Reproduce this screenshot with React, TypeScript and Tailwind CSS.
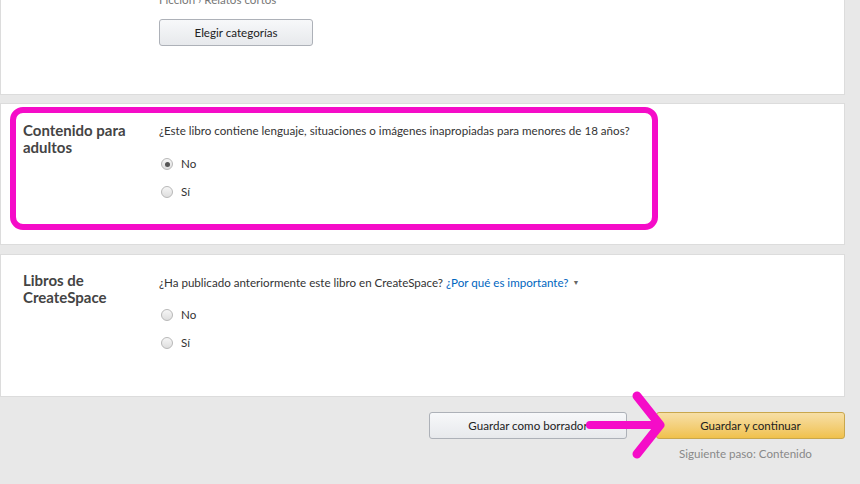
import React from "react";

const font = { fontFamily: "Lato, 'Open Sans', 'Liberation Sans', sans-serif" };

function Radio({ label, checked = false }: { label: string; checked?: boolean }) {
  return (
    <div className="flex h-[28px] items-center gap-[8px] pl-[2px]">
      <span className="flex h-[12px] w-[12px] items-center justify-center rounded-full border border-[#b8b8b8] bg-gradient-to-b from-[#f6f6f6] to-[#dedede]">
        {checked && <span className="h-[5px] w-[5px] rounded-full bg-[#555]" />}
      </span>
      <span className="text-[11.6px] text-[#333]">{label}</span>
    </div>
  );
}

function Section({
  title,
  children,
  className = "",
}: {
  title: React.ReactNode;
  children: React.ReactNode;
  className?: string;
}) {
  return (
    <div className={`grid w-[845px] grid-cols-[136px_1fr] border border-[#dcdcdc] bg-white px-[22px] ${className}`}>
      <div className="text-[15px] font-bold leading-[17px] text-[#444]">{title}</div>
      <div>{children}</div>
    </div>
  );
}

export default function App() {
  return (
    <div className="relative h-[484px] w-[860px] overflow-hidden bg-[#e8e8e8]" style={font}>
      {/* Categories panel (cut at top) */}
      <div className="flex h-[95px] w-[845px] flex-col items-start border border-t-0 border-[#dcdcdc] bg-white pl-[158px]">
        <div className="-mt-[9px] text-[11.6px] leading-[17px] text-[#777]">Ficción › Relatos cortos</div>
        <button className="mt-[11px] h-[27px] w-[154px] rounded-[3px] border border-[#adb1b8] bg-gradient-to-b from-[#f7f8fa] to-[#e7e9ec] text-[11.6px] text-[#222]">
          Elegir categorías
        </button>
      </div>

      {/* Adult content */}
      <Section title={<>Contenido para<br />adultos</>} className="mt-[8px] h-[142px] pt-[18px]">
        <div className="text-[11.6px] leading-[17px] text-[#333]">
          ¿Este libro contiene lenguaje, situaciones o imágenes inapropiadas para menores de 18 años?
        </div>
        <div className="mt-[11px]">
          <Radio label="No" checked />
          <Radio label="Sí" />
        </div>
      </Section>

      {/* CreateSpace */}
      <Section title={<>Libros de<br />CreateSpace</>} className="mt-[9px] h-[143px] pt-[17px]">
        <div className="flex items-center pt-[2px] text-[11.6px] leading-[17px] text-[#333]">
          ¿Ha publicado anteriormente este libro en CreateSpace?
          <span className="ml-[3px] text-[#0066c0]">¿Por qué es importante?</span>
          <span className="ml-[4px] mt-[-1px] text-[7px] text-[#666]">▼</span>
        </div>
        <div className="mt-[10px]">
          <Radio label="No" />
          <Radio label="Sí" />
        </div>
      </Section>

      {/* Footer */}
      <div className="flex w-[845px] justify-end gap-[29px] pt-[15px]">
        <button className="h-[27px] w-[198px] rounded-[3px] border border-[#adb1b8] bg-gradient-to-b from-[#f7f8fa] to-[#e7e9ec] text-[11.6px] text-[#222]">
          Guardar como borrador
        </button>
        <div className="flex w-[189px] flex-col items-center">
          <button className="h-[27px] w-full rounded-[3px] border border-[#c9a74c] bg-gradient-to-b from-[#f7dfa5] to-[#f0c14b] text-[11.6px] text-[#222]">
            Guardar y continuar
          </button>
          <div className="mt-[6px] pr-[10px] text-[11.6px] text-[#888]">Siguiente paso: Contenido</div>
        </div>
      </div>

      {/* Magenta highlight box */}
      <div className="absolute left-[10px] top-[107px] h-[123px] w-[648px] rounded-[13px] border-[6px] border-[#f50cc8]" />

      {/* Magenta arrow */}
      <svg className="absolute left-[580px] top-[385px]" width="100" height="80" viewBox="0 0 100 80">
        <path d="M10 40 H76" stroke="#f50cc8" strokeWidth="8" strokeLinecap="round" fill="none" />
        <path d="M57 11 L80 40 L57 69" stroke="#f50cc8" strokeWidth="9" strokeLinecap="round" strokeLinejoin="round" fill="none" />
      </svg>
    </div>
  );
}
